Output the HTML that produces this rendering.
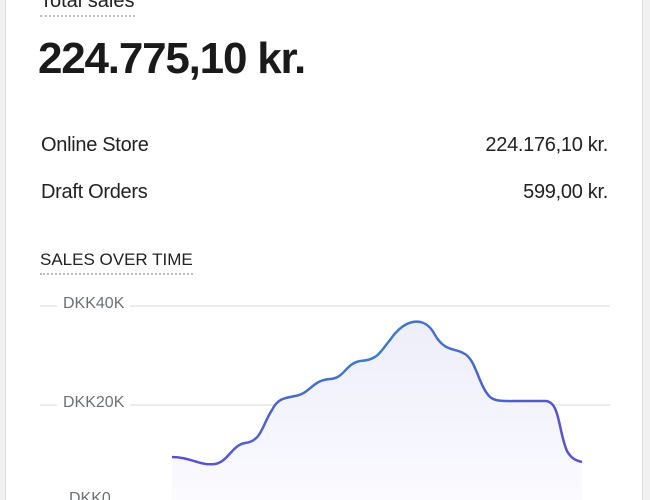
<!DOCTYPE html>
<html style="overflow:hidden;height:500px"><head><style>
body{margin:0;width:650px;height:500px;overflow:hidden;background:#f1f1f1;font-family:"Liberation Sans",sans-serif;color:#202223;position:relative}
.card{position:absolute;left:5px;top:-20px;width:636px;height:540px;background:#fff;border:1px solid #dcdcdc}
.t{position:absolute;left:40px;top:-11px;font-size:20px;border-bottom:2px dotted #bbb;padding-bottom:2px;line-height:24px}
.big{position:absolute;left:38px;top:33px;font-size:44px;font-weight:bold;letter-spacing:-1.2px;line-height:52px;color:#1a1a1a}
.row{position:absolute;left:41px;right:42px;font-size:20px;display:flex;justify-content:space-between;letter-spacing:-0.3px}
.h{position:absolute;left:40px;top:250px;font-size:17px;letter-spacing:0;border-bottom:2px dotted #bbb;padding-bottom:3px}
.lbl{position:absolute;font-size:16px;color:#6d7175;background:#fff;padding:0 6px}
</style></head><body>
<div class="card"></div>
<div class="t">Total sales</div>
<div class="big">224.775,10 kr.</div>
<div class="row" style="top:134px"><span>Online Store</span><span>224.176,10 kr.</span></div>
<div class="row" style="top:181px"><span>Draft Orders</span><span>599,00 kr.</span></div>
<div class="h">SALES OVER TIME</div>
<svg style="position:absolute;left:0;top:0" width="650" height="500">
<defs><linearGradient id="g" x1="0" x2="1"><stop offset="0" stop-color="#5b4fd0"/><stop offset="0.5" stop-color="#3e7cc4"/><stop offset="1" stop-color="#5b4fd0"/></linearGradient>
<linearGradient id="f" x1="0" y1="0" x2="0" y2="1"><stop offset="0" stop-color="#eeeefa"/><stop offset="1" stop-color="#fafaff"/></linearGradient></defs>
<line x1="40" y1="306" x2="610" y2="306" stroke="#e6e6e6" stroke-width="1.5"/>
<line x1="40" y1="405" x2="610" y2="405" stroke="#e6e6e6" stroke-width="1.5"/>
<path d="M172,457 C190,457 200,466 215,464 C228,462 232,445 245,443 C262,441 262,425 272,410 C278,398 285,398 295,396 C310,394 312,380 330,379 C345,378 345,364 360,361 C378,360 380,352 390,340 C405,318 425,315 435,335 C445,352 455,348 463,353 C476,358 478,385 490,397 C496,402 505,401 520,401 L545,401 C560,401 558,430 567,451 C572,460 578,461 582,462 L582,500 L172,500 Z" fill="url(#f)"/>
<path d="M172,457 C190,457 200,466 215,464 C228,462 232,445 245,443 C262,441 262,425 272,410 C278,398 285,398 295,396 C310,394 312,380 330,379 C345,378 345,364 360,361 C378,360 380,352 390,340 C405,318 425,315 435,335 C445,352 455,348 463,353 C476,358 478,385 490,397 C496,402 505,401 520,401 L545,401 C560,401 558,430 567,451 C572,460 578,461 582,462" fill="none" stroke="url(#g)" stroke-width="2.5"/>
</svg>
<div class="lbl" style="left:57px;top:295px">DKK40K</div>
<div class="lbl" style="left:57px;top:394px">DKK20K</div>
<div class="lbl" style="left:63px;top:490px">DKK0</div>
</body></html>
